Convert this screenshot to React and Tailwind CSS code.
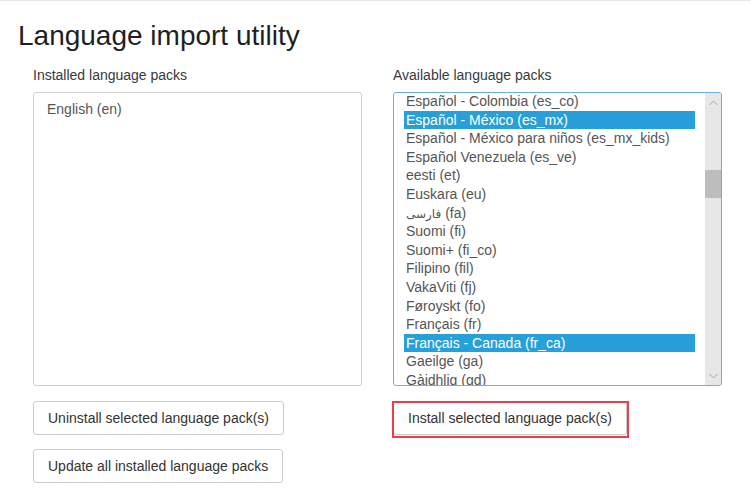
import React from "react";

const installed = [{ name: "English (en)" }];

const available = [
  { name: "Español - Colombia (es_co)" },
  { name: "Español - México (es_mx)", selected: true },
  { name: "Español - México para niños (es_mx_kids)" },
  { name: "Español Venezuela (es_ve)" },
  { name: "eesti (et)" },
  { name: "Euskara (eu)" },
  { name: "فارسی (fa)", rtl: true },
  { name: "Suomi (fi)" },
  { name: "Suomi+ (fi_co)" },
  { name: "Filipino (fil)" },
  { name: "VakaViti (fj)" },
  { name: "Føroyskt (fo)" },
  { name: "Français (fr)" },
  { name: "Français - Canada (fr_ca)", selected: true },
  { name: "Gaeilge (ga)" },
  { name: "Gàidhlig (gd)" },
];

function Chevron({ up }) {
  return (
    <svg width="9" height="6" viewBox="0 0 9 6" className="block">
      <path
        d={up ? "M0.5 5 L4.5 1 L8.5 5" : "M0.5 1 L4.5 5 L8.5 1"}
        fill="none"
        stroke="#a3a3a3"
        strokeWidth="1"
      />
    </svg>
  );
}

function Button({ children }) {
  return (
    <button className="h-[34px] px-[14px] border border-[#cccccc] rounded-[3px] bg-white text-[14px] leading-[20px] text-[#333333] whitespace-nowrap">
      {children}
    </button>
  );
}

export default function App() {
  return (
    <main
      className="w-[751px] h-[494px] bg-white border-t border-[#e6e6e6] overflow-hidden"
      style={{ fontFamily: '"Liberation Sans", "DejaVu Sans", Arial, sans-serif' }}
    >
      <div className="px-[18px]">
        <h2 className="mt-[19px] text-[28px] leading-[31px] text-[#1f1f1f] font-normal">
          Language import utility
        </h2>

        <div className="grid grid-cols-[360px_360px] mt-[14px]">
          {/* installed */}
          <div className="px-[15px]">
            <div className="text-[14px] leading-[20px] text-[#373a3c]">Installed language packs</div>
            <div className="mt-[7px] w-[329px] h-[294px] border border-[#cfcfcf] rounded-[3px] px-[12px] pt-[7px]">
              {installed.map((l) => (
                <div key={l.name} className="h-[18.6px] leading-[18.6px] text-[14px] text-[#555555] px-[1px]">
                  {l.name}
                </div>
              ))}
            </div>
            <div className="mt-[15px] flex flex-col items-start gap-[14px]">
              <Button>Uninstall selected language pack(s)</Button>
              <Button>Update all installed language packs</Button>
            </div>
          </div>

          {/* available */}
          <div className="px-[15px]">
            <div className="text-[14px] leading-[20px] text-[#373a3c]">Available language packs</div>
            <div className="mt-[7px] w-[329px] h-[294px] border border-[#6aaee3] rounded-[3px] flex overflow-hidden">
              <div className="flex-1 px-[10px] overflow-hidden">
                <div className="-mt-[1px]">
                  {available.map((l) => (
                    <div
                      key={l.name}
                      className={
                        "h-[18.6px] leading-[18.6px] text-[14px] px-[2px] whitespace-nowrap " +
                        (l.selected ? "bg-[#27a0da] text-white" : "text-[#555555]")
                      }
                    >
                      {l.rtl ? (
                        <span>
                          <span className="text-[12px]" dir="rtl">فارسی</span> (fa)
                        </span>
                      ) : (
                        l.name
                      )}
                    </div>
                  ))}
                </div>
              </div>
              <div className="w-[16px] bg-[#e7e7e7] flex flex-col items-center">
                <div className="h-[16px] flex items-center justify-center mt-[2px]">
                  <Chevron up />
                </div>
                <div className="mt-[59px] w-full h-[28px] bg-[#bdbdbd]" />
                <div className="flex-1" />
                <div className="h-[16px] flex items-center justify-center mb-[1px]">
                  <Chevron />
                </div>
              </div>
            </div>
            <div className="mt-[15px] relative inline-block">
              <Button>Install selected language pack(s)</Button>
              <div className="absolute -left-[1px] top-0 w-[237px] h-[37px] border-2 border-[#ee3d46] pointer-events-none" />
            </div>
          </div>
        </div>
      </div>
    </main>
  );
}
